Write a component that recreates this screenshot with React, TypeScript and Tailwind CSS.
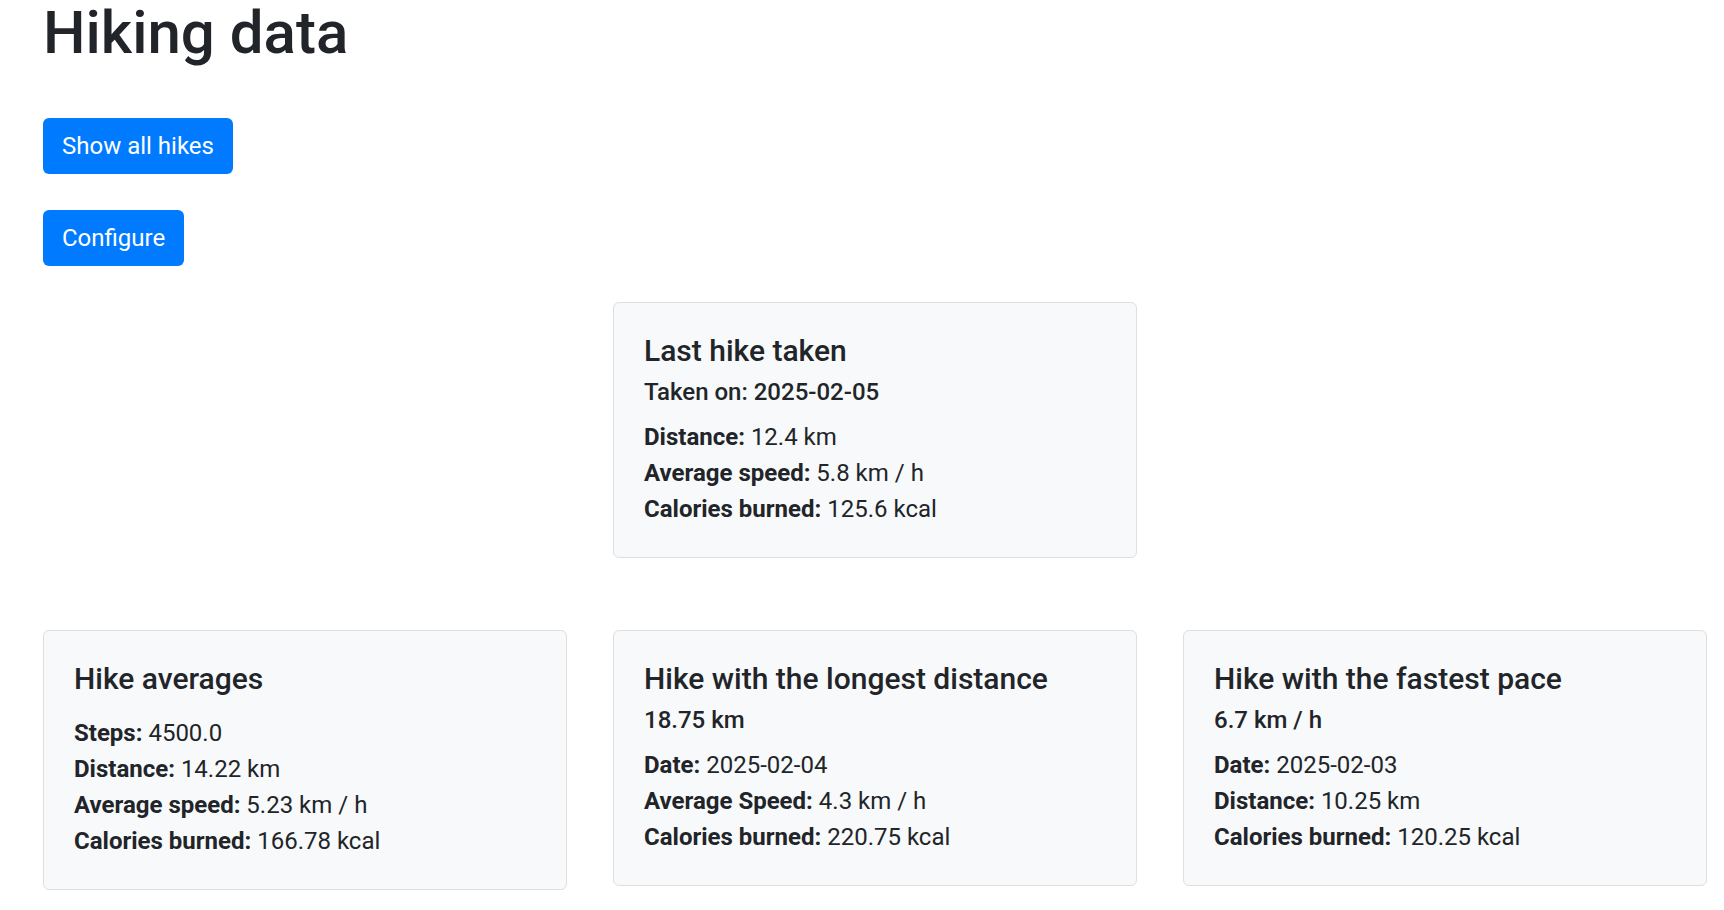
const lastHike = {
  date: "2025-02-05",
  rows: [
    ["Distance:", "12.4 km"],
    ["Average speed:", "5.8 km / h"],
    ["Calories burned:", "125.6 kcal"],
  ],
};

const statCards = [
  {
    title: "Hike averages",
    rows: [
      ["Steps:", "4500.0"],
      ["Distance:", "14.22 km"],
      ["Average speed:", "5.23 km / h"],
      ["Calories burned:", "166.78 kcal"],
    ],
  },
  {
    title: "Hike with the longest distance",
    subtitle: "18.75 km",
    rows: [
      ["Date:", "2025-02-04"],
      ["Average Speed:", "4.3 km / h"],
      ["Calories burned:", "220.75 kcal"],
    ],
  },
  {
    title: "Hike with the fastest pace",
    subtitle: "6.7 km / h",
    rows: [
      ["Date:", "2025-02-03"],
      ["Distance:", "10.25 km"],
      ["Calories burned:", "120.25 kcal"],
    ],
  },
];

function HikeCard({
  title,
  subtitle,
  rows,
}: {
  title: string;
  subtitle?: string;
  rows: string[][];
}) {
  return (
    <div className="rounded-[6px] border border-[#dfdfdf] bg-[#f8f9fa] p-[30px]">
      <h5
        className={`text-[30px] font-medium leading-[36px] ${
          subtitle ? "mb-[9px]" : "mb-[18px]"
        }`}
      >
        {title}
      </h5>

      {subtitle && (
        <h6 className="mb-[12px] text-[24px] font-medium leading-[28.8px]">
          {subtitle}
        </h6>
      )}

      <div className="text-[24px] leading-[36px]">
        {rows.map(([label, value]) => (
          <div key={label}>
            <span className="font-bold">{label}</span> {value}
          </div>
        ))}
      </div>
    </div>
  );
}

export default function App() {
  return (
    <div className="min-h-[910px] bg-white pl-[43px] text-[#212529] font-['Roboto',sans-serif]">
      {/* Header */}
      <h1 className="mt-[-3px] mb-[49px] text-[60px] font-medium leading-[72px]">
        Hiking data
      </h1>

      {/* Actions */}
      <div className="flex flex-col items-start gap-[36px]">
        <button className="h-[56px] rounded-[6px] bg-[#007bff] px-[19px] text-[24px] leading-[36px] text-white">
          Show all hikes
        </button>
        <button className="h-[56px] rounded-[6px] bg-[#007bff] px-[19px] text-[24px] leading-[36px] text-white">
          Configure
        </button>
      </div>

      {/* Last hike */}
      <div className="mt-[36px] grid grid-cols-[repeat(3,524px)] gap-x-[46px]">
        <div className="col-start-2">
          <HikeCard
            title="Last hike taken"
            subtitle={`Taken on: ${lastHike.date}`}
            rows={lastHike.rows}
          />
        </div>
      </div>

      {/* Stats */}
      <div className="mt-[72px] grid grid-cols-[repeat(3,524px)] items-start gap-x-[46px]">
        {statCards.map((card) => (
          <HikeCard key={card.title} {...card} />
        ))}
      </div>
    </div>
  );
}
